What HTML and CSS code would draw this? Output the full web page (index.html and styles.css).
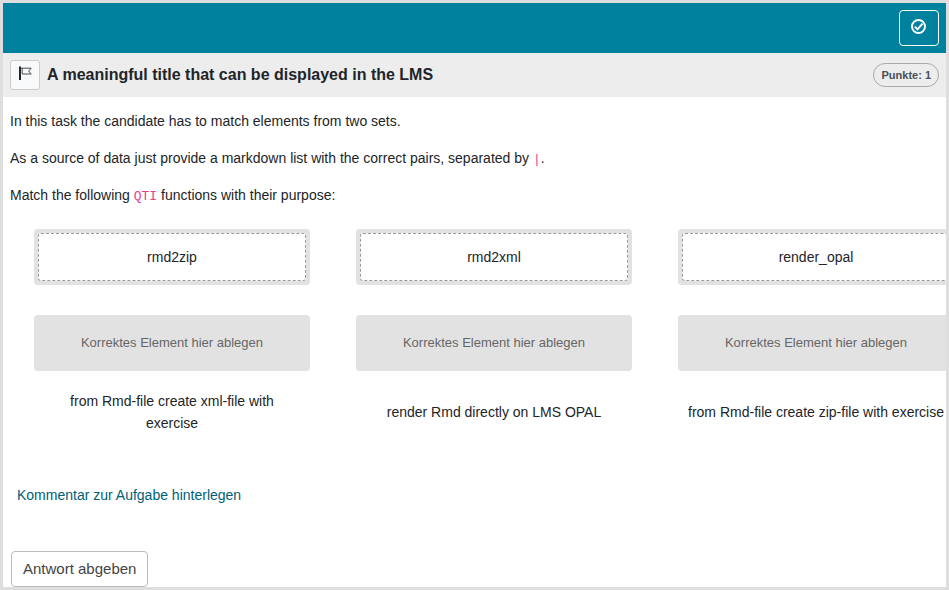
FILE: index.html
```html
<!DOCTYPE html>
<html lang="de">
<head>
<meta charset="utf-8">
<meta name="viewport" content="width=device-width, initial-scale=1">
<title>A meaningful title that can be displayed in the LMS</title>
<link rel="stylesheet" href="styles.css">
</head>
<body>
<header class="topbar">
  <button class="finish" type="button" aria-label="Test beenden">
    <svg width="16" height="16" viewBox="0 0 16 16" fill="none" stroke="currentColor" stroke-width="2" aria-hidden="true">
      <circle cx="7.5" cy="7.5" r="6.5"/>
      <path d="M3.8 7.6l2.7 2.7 5-5.6"/>
    </svg>
  </button>
</header>
<div class="titlebar">
  <button class="flag" type="button" aria-label="Aufgabe markieren">
    <svg width="14" height="14" viewBox="0 0 14 14" fill="none" stroke="currentColor" aria-hidden="true">
      <path d="M2 0.5v13.5" stroke-width="2"/>
      <path d="M3 2.2h10.2l-2.6 2.9 2.6 2.9H4.2V2.2" stroke-width="0.8"/>
    </svg>
  </button>
  <h1 class="title">A meaningful title that can be displayed in the LMS</h1>
  <span class="points">Punkte: 1</span>
</div>
<main class="content">
  <div class="intro">
    <p>In this task the candidate has to match elements from two sets.</p>
    <p>As a source of data just provide a markdown list with the correct pairs, separated by <code>|</code>.</p>
    <p>Match the following <code>QTI</code> functions with their purpose:</p>
  </div>
  <div class="match">
    <div class="slot"><div class="item" draggable="true">rmd2zip</div></div>
    <div class="slot"><div class="item" draggable="true">rmd2xml</div></div>
    <div class="slot"><div class="item" draggable="true">render_opal</div></div>
    <div class="slot drop">Korrektes Element hier ablegen</div>
    <div class="slot drop">Korrektes Element hier ablegen</div>
    <div class="slot drop">Korrektes Element hier ablegen</div>
    <div class="purpose">from Rmd-file create xml-file with exercise</div>
    <div class="purpose">render Rmd directly on LMS OPAL</div>
    <div class="purpose wide">from Rmd-file create zip-file with exercise</div>
  </div>
  <a class="comment" href="#kommentar">Kommentar zur Aufgabe hinterlegen</a>
  <button class="submit" type="button">Antwort abgeben</button>
</main>
</body>
</html>
```
FILE: styles.css
```css
* {
  box-sizing: border-box;
}

html {
  height: 100%;
}

body {
  margin: 0;
  height: 100%;
  border: 3px solid #dedede;
  overflow: hidden;
  background: #fff;
  color: #212529;
  font-family: "Liberation Sans", Arial, sans-serif;
  font-size: 14px;
  line-height: 22px;
}

button {
  font-family: inherit;
  cursor: pointer;
}

.topbar {
  display: flex;
  justify-content: flex-end;
  padding: 7px;
  background: #00819e;
}

.finish {
  display: flex;
  justify-content: center;
  width: 40px;
  height: 36px;
  padding: 8px 0 0;
  align-items: flex-start;
  border: 1px solid #fff;
  border-radius: 4px;
  background: transparent;
  color: #fff;
}

.titlebar {
  display: flex;
  align-items: center;
  gap: 7px;
  padding: 7px;
  background: #ededed;
}

.flag {
  display: flex;
  align-items: flex-start;
  justify-content: center;
  width: 30px;
  height: 30px;
  padding: 5px 0 0;
  border: 1px solid #ccc;
  border-radius: 3px;
  background: #f8f9fa;
  color: #212529;
}

.title {
  flex: 1;
  margin: 0;
  font-size: 16px;
  line-height: 22px;
}

.points {
  padding: 0 7px;
  border: 1px solid #aaa;
  border-radius: 12px;
  color: #495057;
  font-size: 11px;
  font-weight: bold;
}

.content {
  padding: 13px 7px 0;
}

.intro p {
  margin: 0 0 15px;
}

code {
  color: #e83e8c;
  font-family: "Liberation Mono", monospace;
  font-size: 13px;
  line-height: 1;
}

.match {
  display: grid;
  grid-template-columns: repeat(3, minmax(276px, 1fr));
  column-gap: 46px;
  padding: 8px 24px 0;
  text-align: center;
}

.slot {
  height: 56px;
  margin-bottom: 30px;
  padding: 4px;
  border-radius: 4px;
  background: #e2e2e2;
}

.item {
  display: flex;
  align-items: center;
  justify-content: center;
  height: 48px;
  border: 1px dashed #999;
  border-radius: 3px;
  background: #fff;
}

.drop {
  display: flex;
  align-items: center;
  justify-content: center;
  margin-bottom: 19px;
  color: #666;
  font-size: 13px;
}

.purpose {
  display: flex;
  align-items: center;
  justify-content: center;
  padding: 0 16px;
}

.wide {
  padding: 0;
}

.comment {
  display: block;
  margin: 50px 7px 0;
  color: #006078;
  text-decoration: none;
}

.submit {
  display: block;
  height: 36px;
  margin: 45px 1px 0;
  padding: 0 11px 2px;
  border: 1px solid #bbb;
  border-radius: 4px;
  background: #fff;
  color: #444;
  font-size: 15px;
}
```
